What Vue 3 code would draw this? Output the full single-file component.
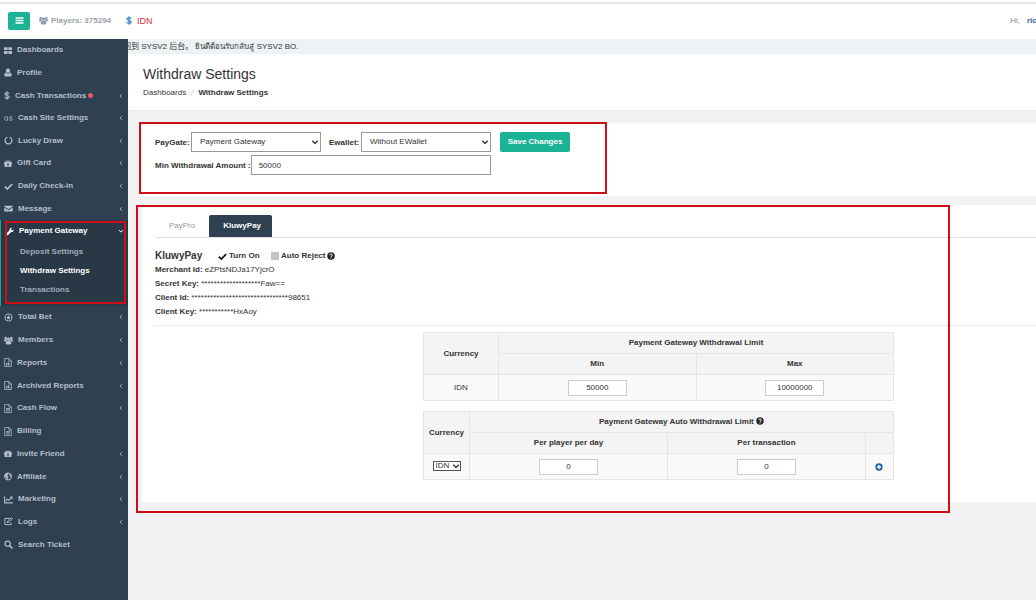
<script setup>
import { ref } from 'vue'

const icons = {
  grid: '<path d="M1 2h6.3v5.3H1zM8.7 2H15v5.3H8.7zM1 8.7h6.3V14H1zM8.7 8.7H15V14H8.7z" fill="currentColor"/>',
  user: '<path d="M8 1a3.600 3.600 0 0 1 3.600 3.800C11.600 7 10 8.800 8 8.800S4.400 7 4.400 4.800A3.600 3.600 0 0 1 8 1zM4.300 8C5.300 9.300 6.500 10 8 10s2.700-.7 3.700-2c2 .4 2.800 2.300 2.800 4.600 0 1.600-.8 2.400-2.200 2.400H3.700c-1.400 0-2.200-.8-2.200-2.400C1.500 10.300 2.300 8.400 4.300 8z" fill="currentColor"/>',
  dollar: '<path d="M12 4.600C11.200 3.500 9.800 3 8 3 5.700 3 4.300 3.900 4.300 5.400c0 3.600 7.700 1.500 7.700 5.200C12 12.200 10.400 13 8 13c-2 0-3.500-.6-4.300-1.800M8 .5v15" fill="none" stroke="currentColor" stroke-width="1.900"/>',
  settings: '<path d="M6.500 5.200C3.500 4 .8 5 .8 8s2.700 4 5.700 2.800V5.200M14.800 5.200c-2-1-5-.8-5 1.200 0 2.200 5 1 5 3.200 0 2-3.300 2.100-5.300 1" fill="none" stroke="currentColor" stroke-width="1.500"/>',
  ring: '<path d="M10.200 2.300a6.100 6.100 0 1 1-4.400 0" fill="none" stroke="currentColor" stroke-width="2.200"/>',
  gift: '<path fill-rule="evenodd" d="M2 5.500h2.200C2.500 3.200 5.500.8 8 4c2.500-3.200 5.500-.8 3.800 1.500H14l1 1V10h-1v4H2v-4H1V6.500zM7 7v6h2V7zM5 4.300c.3.700 1.300.8 2 .7-.7-1.200-1.800-1.500-2-.7zm6 0c-.2-.8-1.300-.5-2 .7.700.1 1.700 0 2-.7z" fill="currentColor"/>',
  check: '<path d="M1.500 8.200l4.300 4.300L14.500 3.800" fill="none" stroke="currentColor" stroke-width="3"/>',
  mail: '<path d="M.5 3h15v1.500L8 9.500.5 4.500zM.5 6L8 11l7.500-5v7.500H.5z" fill="currentColor"/>',
  wrench: '<path d="M15 4.200l-2.800 1.600-2-1.200V2.400L13 .9C10.200-.2 6.500 1.800 7.100 5.600L.9 11.800c-1.500 1.700 1.500 4.800 3.300 3.300l6.200-6.200C14 9.500 15.700 7 15 4.200z" fill="currentColor"/>',
  ball: '<circle cx="8" cy="8" r="6.500" fill="none" stroke="currentColor" stroke-width="1.500"/><path d="M8 4.800l3 2.200-1.100 3.500H6.100L5 7zM6 1.700h4L8 3.200zM1.800 6l1.600 1.800L2 10zM14.200 6l-1.600 1.800L14 10zM4.500 13l1-1.800 1.500 3zM11.500 13l-1-1.800-1.500 3z" fill="currentColor"/>',
  users: '<circle cx="8" cy="5.500" r="3" fill="currentColor"/><circle cx="3" cy="3.500" r="2.200" fill="currentColor"/><circle cx="13" cy="3.500" r="2.200" fill="currentColor"/><path d="M4.800 8.500h6.400c1.300.7 1.800 2.500 1.800 4.500 0 1.300-.8 2-2 2H5c-1.200 0-2-.7-2-2 0-2 .5-3.800 1.800-4.500zM.2 9c0-2 .5-3.500 1.500-3.500h2.600c.1 1 .5 1.700 1 2.300C4.200 7.800 3.300 8.500 2.700 9.800H1C.4 9.800.2 9.500.2 9zm15.600 0c0-2-.5-3.500-1.500-3.500h-2.600c-.1 1-.5 1.700-1 2.300 1.100 0 2 .7 2.600 2H15c.6 0 .8-.3.800-.8z" fill="currentColor"/>',
  fileChart: '<path d="M2 1h8l4 4v10H2zM9.500 1v4.500H14" fill="none" stroke="currentColor" stroke-width="1.400"/><path d="M4.500 13V9.500h2V13zM7.500 13V7h2v6zM10.300 13v-3h1.400v3z" fill="currentColor"/>',
  fileText: '<path d="M2 1h8l4 4v10H2zM9.500 1v4.500H14M4.500 8h7M4.500 10.200h7M4.500 12.400h7" fill="none" stroke="currentColor" stroke-width="1.300"/>',
  globe: '<circle cx="8" cy="8" r="6.300" fill="none" stroke="currentColor" stroke-width="1.600"/><path d="M2 5.500l4-3.700 3.200.5L8 5 6.500 6.200 7.500 8l2 1.500-1.700 2.200-.5 2.300-1.700-1-.5-3-2.800-2zM10.500 3.500l3 1.500 1 4-2.500-.8-1.700-2z" fill="currentColor"/>',
  chart: '<path d="M1 2v12h14.500M3 11l3.500-4 2.500 2.300 5-5.300M10.500 3.500H14.500V7.500" fill="none" stroke="currentColor" stroke-width="1.800"/>',
  edit: '<path d="M10 2.500H1.500v11h11V10M6 10l.5-2.800L13 1l2 2-6.300 6.300z" fill="none" stroke="currentColor" stroke-width="1.700"/>',
  search: '<circle cx="6.500" cy="6.500" r="4.600" fill="none" stroke="currentColor" stroke-width="2"/><path d="M10 10l5 5" stroke="currentColor" stroke-width="2.600"/>',
  left: '<path d="M10.500 3L5.500 8l5 5" fill="none" stroke="currentColor" stroke-width="2.200"/>',
  down: '<path d="M2.500 5.500L8 11l5.500-5.500" fill="none" stroke="currentColor" stroke-width="2.600"/>',
  help: '<circle cx="8" cy="8" r="7.500" fill="currentColor"/><path d="M5.400 6.300C5.500 3 10.700 3.200 10.600 6.200 10.500 8 8 7.800 8 10M8 11v2" fill="none" stroke="#fff" stroke-width="2"/>',
  add: '<circle cx="8" cy="8" r="7.300" fill="currentColor"/><path d="M6.600 3.800h2.800v2.800h2.800v2.800H9.400v2.800H6.600V9.400H3.800V6.600h2.800z" fill="#fff"/>',
  bars: '<path d="M1 3.500h14M1 8h14M1 12.500h14" stroke="currentColor" stroke-width="2.600"/>',
}

const upper = [
  { icon: 'grid', text: 'Dashboards', size: 'slim' },
  { icon: 'user', text: 'Profile', size: 'slim' },
  { icon: 'dollar', text: 'Cash Transactions', size: 'narrow', dot: true, more: true },
  { icon: 'settings', text: 'Cash Site Settings', more: true },
  { icon: 'ring', text: 'Lucky Draw', more: true },
  { icon: 'gift', text: 'Gift Card', size: 'slim', more: true },
  { icon: 'check', text: 'Daily Check-in', more: true },
  { icon: 'mail', text: 'Message', more: true },
]
const lower = [
  { icon: 'ball', text: 'Total Bet', more: true },
  { icon: 'users', text: 'Members', more: true },
  { icon: 'fileChart', text: 'Reports', size: 'slim', more: true },
  { icon: 'fileChart', text: 'Archived Reports', size: 'slim', more: true },
  { icon: 'fileText', text: 'Cash Flow', size: 'slim', more: true },
  { icon: 'fileText', text: 'Billing', size: 'slim' },
  { icon: 'gift', text: 'Invite Friend', size: 'slim', more: true },
  { icon: 'globe', text: 'Affiliate', size: 'slim', more: true },
  { icon: 'chart', text: 'Marketing', more: true },
  { icon: 'edit', text: 'Logs', more: true },
  { icon: 'search', text: 'Search Ticket' },
]
const credentials = [
  { name: 'Merchant Id:', value: 'eZPtsNDJa17YjcrO' },
  { name: 'Secret Key:', value: '*'.repeat(19) + 'Faw==' },
  { name: 'Client Id:', value: '*'.repeat(31) + '98651' },
  { name: 'Client Key:', value: '*'.repeat(11) + 'HxAoy' },
]

const minAmount = ref('50000')
const limitMin = ref('50000')
const limitMax = ref('10000000')
const perDay = ref('0')
const perTransaction = ref('0')
const turnOn = ref(true)
const autoReject = ref(false)
</script>

<template>
  <div class="page">
    <header class="topbar">
      <button class="toggle" type="button" aria-label="Toggle menu">
        <svg class="icon" viewBox="0 0 16 16" v-html="icons.bars"></svg>
      </button>
      <span class="players"><svg class="icon" viewBox="0 0 16 16" v-html="icons.users"></svg>Players: 375294</span>
      <span class="currency"><svg class="icon" viewBox="0 0 16 16" preserveAspectRatio="xMidYMid slice" v-html="icons.dollar"></svg>IDN</span>
      <span class="greeting">Hi,</span>
      <a class="account" href="#">ric</a>
    </header>

    <div class="body">
      <nav class="sidebar">
        <ul class="group upper">
          <li v-for="item in upper" :key="item.text">
            <a href="#">
              <svg class="icon" :class="item.size" viewBox="0 0 16 16" preserveAspectRatio="xMidYMid slice" v-html="icons[item.icon]"></svg>
              <span>{{ item.text }}</span>
              <i v-if="item.dot" class="dot"></i>
              <svg v-if="item.more" class="arrow" viewBox="0 0 16 16" v-html="icons.left"></svg>
            </a>
          </li>
        </ul>
        <div class="open">
          <a class="open-head" href="#">
            <svg class="icon slim" viewBox="0 0 16 16" v-html="icons.wrench"></svg>
            <span>Payment Gateway</span>
            <svg class="arrow" viewBox="0 0 16 16" v-html="icons.down"></svg>
          </a>
          <ul class="sub">
            <li><a href="#">Deposit Settings</a></li>
            <li><a class="current" href="#">Withdraw Settings</a></li>
            <li><a href="#">Transactions</a></li>
          </ul>
          <div class="mark mark-menu"></div>
        </div>
        <ul class="group lower">
          <li v-for="item in lower" :key="item.text">
            <a href="#">
              <svg class="icon" :class="item.size" viewBox="0 0 16 16" preserveAspectRatio="xMidYMid slice" v-html="icons[item.icon]"></svg>
              <span>{{ item.text }}</span>
              <svg v-if="item.more" class="arrow" viewBox="0 0 16 16" v-html="icons.left"></svg>
            </a>
          </li>
        </ul>
      </nav>

      <main class="main">
        <div class="ticker"><span>回到 SYSV2 后台。 ยินดีต้อนรับกลับสู่ SYSV2 BO.</span></div>
        <div class="heading">
          <h1>Withdraw Settings</h1>
          <div class="crumbs"><a href="#">Dashboards</a><i>/</i><strong>Withdraw Settings</strong></div>
        </div>

        <div class="content">
          <section class="card filter">
            <div class="row">
              <label class="l1" for="paygate">PayGate:</label>
              <span class="pick">
                <select id="paygate"><option>Payment Gateway</option></select>
                <svg class="caret" viewBox="0 0 16 16" v-html="icons.down"></svg>
              </span>
              <label class="l2" for="ewallet">Ewallet:</label>
              <span class="pick">
                <select id="ewallet"><option>Without EWallet</option></select>
                <svg class="caret" viewBox="0 0 16 16" v-html="icons.down"></svg>
              </span>
              <button class="save" type="button">Save Changes</button>
            </div>
            <div class="row amount">
              <label for="min-amount">Min Withdrawal Amount :</label>
              <input id="min-amount" v-model="minAmount" type="text">
            </div>
            <div class="mark mark-filter"></div>
          </section>

          <section class="card gateway">
            <div class="tabs">
              <button type="button">PayPro</button>
              <button class="active" type="button">KluwyPay</button>
            </div>
            <div class="provider">
              <h2>KluwyPay</h2>
              <label class="turn"><input v-model="turnOn" type="checkbox"><svg class="tick" viewBox="0 0 16 16" v-html="icons.check"></svg>Turn On</label>
              <label class="reject"><input v-model="autoReject" type="checkbox"><span class="square"></span>Auto Reject<svg class="help" viewBox="0 0 16 16" v-html="icons.help"></svg></label>
            </div>
            <div class="credentials">
              <p v-for="c in credentials" :key="c.name"><strong>{{ c.name }}</strong> {{ c.value }}</p>
            </div>
            <div class="limits">
              <table>
                <colgroup><col class="c75"><col><col></colgroup>
                <thead>
                  <tr><th rowspan="2">Currency</th><th colspan="2">Payment Gateway Withdrawal Limit</th></tr>
                  <tr><th>Min</th><th>Max</th></tr>
                </thead>
                <tbody>
                  <tr>
                    <td>IDN</td>
                    <td><input v-model="limitMin" type="text" aria-label="Min"></td>
                    <td><input v-model="limitMax" type="text" aria-label="Max"></td>
                  </tr>
                </tbody>
              </table>
              <table>
                <colgroup><col class="c46"><col><col><col class="c28"></colgroup>
                <thead>
                  <tr><th rowspan="2">Currency</th><th colspan="3">Payment Gateway Auto Withdrawal Limit <svg class="help" viewBox="0 0 16 16" v-html="icons.help"></svg></th></tr>
                  <tr><th>Per player per day</th><th>Per transaction</th><th></th></tr>
                </thead>
                <tbody>
                  <tr>
                    <td>
                      <span class="pick small">
                        <select aria-label="Currency"><option>IDN</option></select>
                        <svg class="caret" viewBox="0 0 16 16" v-html="icons.down"></svg>
                      </span>
                    </td>
                    <td><input v-model="perDay" type="text" aria-label="Per player per day"></td>
                    <td><input v-model="perTransaction" type="text" aria-label="Per transaction"></td>
                    <td><button class="add" type="button" aria-label="Add currency"><svg viewBox="0 0 16 16" v-html="icons.add"></svg></button></td>
                  </tr>
                </tbody>
              </table>
            </div>
            <div class="mark mark-gateway"></div>
          </section>
        </div>
      </main>
    </div>
  </div>
</template>

<style>
html, body { margin: 0; background: #f2f2f2; }
</style>

<style scoped>
.page {
  min-height: 100vh;
  display: flex;
  flex-direction: column;
  overflow: hidden;
  font: 8px/12px "Liberation Sans", "Noto Sans CJK SC", sans-serif;
  color: #333;
}
.page * { box-sizing: border-box; }
a { color: inherit; text-decoration: none; }
ul { list-style: none; margin: 0; padding: 0; }
button, input, select { font: inherit; color: inherit; margin: 0; }
button { padding: 0; border: 0; cursor: pointer; }
svg { display: block; flex: none; }
.icon { width: 9px; height: 9px; }
.icon.slim { width: 8px; }
.icon.narrow { width: 6px; }

.topbar {
  display: flex;
  align-items: center;
  height: 39px;
  padding: 2px 0 0 8px;
  background: #fff;
  box-shadow: inset 0 2px #fff, inset 0 4px #e7e7e7;
}
.toggle {
  display: flex;
  align-items: center;
  justify-content: center;
  width: 22px;
  height: 18px;
  border-radius: 2px;
  background: #1ab394;
  color: #fff;
}
.players { display: flex; align-items: center; gap: 3px; margin-left: 9px; color: #999fa8; font-weight: bold; }
.players .icon { color: #8b9bb4; }
.currency { display: flex; align-items: center; gap: 4px; margin-left: 14px; color: #d8303c; font-size: 9px; }
.currency .icon { width: 8px; color: #2a78b5; }
.greeting { margin-left: auto; color: #888; }
.account { width: 9px; margin-left: 7px; overflow: hidden; color: #33608f; font-weight: bold; }

.body { flex: 1; display: flex; }
.sidebar { flex: none; width: 128px; background: #2f4050; color: #b3bfcd; font-weight: bold; }
.group { display: flex; flex-direction: column; }
.group li { flex: 1; display: flex; }
.upper { height: 181px; }
.lower { height: 250px; }
.group a, .open-head { flex: 1; display: flex; align-items: center; gap: 5px; padding: 0 4px; }
.arrow { width: 6px; height: 6px; margin-left: auto; }
.dot { width: 5px; height: 5px; margin-left: -3px; border-radius: 50%; background: #ed5565; }
.open { position: relative; height: 86px; background: #293846; box-shadow: inset 1px 0 #19aa8d; }
.open-head { height: 22px; padding-left: 6px; color: #fff; }
.sub { color: #9fabb8; }
.sub a { display: block; padding-left: 20px; line-height: 19px; }
.sub .current { color: #fff; }

.mark { position: absolute; border: 2px solid #cc0f18; pointer-events: none; }
.mark-menu { top: 1px; right: 2px; bottom: 2px; left: 5px; }
.mark-filter { top: -1px; left: -3px; width: 468px; bottom: 2px; }
.mark-gateway { top: 0; left: -6px; width: 814px; bottom: -11px; }

.main { flex: 1; min-width: 0; }
.ticker { height: 15px; background: #edf2f5; line-height: 15px; white-space: nowrap; overflow: hidden; }
.ticker span { margin-left: -5px; }
.heading { height: 57px; padding: 12px 15px 0; background: #fff; border-bottom: 1px solid #e7eaec; }
h1 { margin: 0; font-size: 14px; line-height: 16px; font-weight: normal; }
.crumbs { margin-top: 5px; }
.crumbs i { margin: 0 5px; color: #bbb; }
.content { padding: 12px 0 0 14px; }
.card { position: relative; background: #fff; }
.filter { height: 73px; padding: 9px 13px; }
.row { display: flex; align-items: center; font-weight: bold; }
.row label { padding-top: 2px; white-space: nowrap; }
.l1 { width: 36px; }
.l2 { width: 32px; margin-left: 8px; }
.pick { position: relative; display: inline-flex; width: 130px; height: 20px; }
.pick select {
  appearance: none;
  width: 100%;
  padding: 0 8px;
  border: 1px solid #999;
  border-radius: 0;
  background: #fff;
  font-weight: normal;
}
.caret { position: absolute; top: 50%; right: 2px; width: 8px; height: 8px; margin-top: -4px; pointer-events: none; }
.save { width: 70px; height: 20px; margin-left: 9px; border-radius: 2px; background: #1ab394; color: #fff; }
.amount { width: 336px; margin-top: 3px; }
.amount input { flex: 1; min-width: 0; height: 20px; padding: 0 7px; border: 1px solid #999; background: #fff; font-weight: normal; }

.gateway { margin-top: 9px; padding: 10px 0 22px 13px; }
.tabs { display: flex; height: 23px; border-bottom: 1px solid #e0e0e0; font-weight: bold; }
.tabs button { height: 22px; padding: 0 14px; background: none; color: #999; font-weight: normal; }
.tabs .active { width: 63px; border-radius: 2px 2px 0 0; background: #2f4050; color: #fff; font-weight: bold; }
.provider { display: flex; align-items: center; height: 14px; margin-top: 11px; font-weight: bold; }
.provider h2 { width: 63px; margin: 0; font-size: 10px; }
.provider label { display: flex; align-items: center; gap: 2px; }
.provider input { position: absolute; opacity: 0; width: 8px; height: 8px; margin: 0; }
.turn { width: 53px; }
.tick { width: 9px; height: 9px; color: #111; }
.square { width: 8px; height: 8px; background: #c4c4c4; }
.help { display: inline-block; width: 8px; height: 8px; color: #222; vertical-align: -1px; }
.credentials { padding-bottom: 6px; border-bottom: 1px solid #ececec; }
.credentials p { margin: 0; line-height: 14px; }
.limits { display: grid; gap: 10px; padding: 6px 0 0 268px; }
table { width: 471px; table-layout: fixed; border-collapse: collapse; text-align: center; }
th, td { height: 21px; padding: 0; border: 1px solid #e5e5e5; }
th { background: #f4f4f4; }
td { height: 26px; background: #f9f9f9; }
.c75 { width: 75px; }
.c46 { width: 46px; }
.c28 { width: 28px; }
td input { display: block; width: 59px; height: 16px; margin: 0 auto; padding: 0; border: 1px solid #ccc; background: #fff; text-align: center; }
.small { width: 28px; height: 10px; vertical-align: middle; }
.small select { padding: 0 2px; border-color: #555; line-height: 8px; }
.small .caret { right: 1px; }
.add { display: block; margin: 0 auto; background: none; color: #20659f; }
.add svg { width: 8px; height: 8px; }
</style>
